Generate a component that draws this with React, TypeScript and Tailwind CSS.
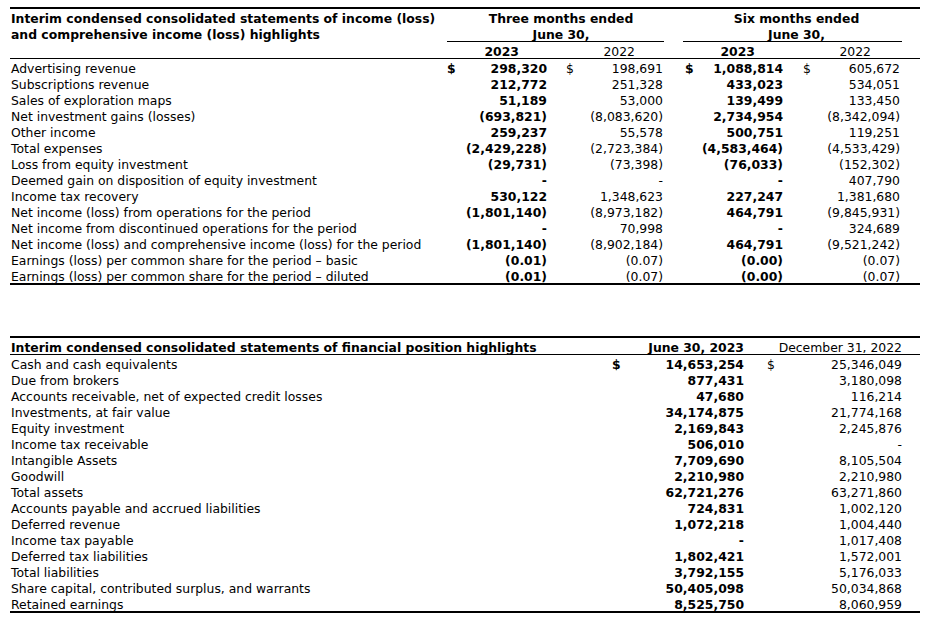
type IncomeRow = [string, string, string, string, string];
type PositionRow = [string, string, string];

const INCOME: IncomeRow[] = [
  ["Advertising revenue", "298,320", "198,691", "1,088,814", "605,672"],
  ["Subscriptions revenue", "212,772", "251,328", "433,023", "534,051"],
  ["Sales of exploration maps", "51,189", "53,000", "139,499", "133,450"],
  ["Net investment gains (losses)", "(693,821)", "(8,083,620)", "2,734,954", "(8,342,094)"],
  ["Other income", "259,237", "55,578", "500,751", "119,251"],
  ["Total expenses", "(2,429,228)", "(2,723,384)", "(4,583,464)", "(4,533,429)"],
  ["Loss from equity investment", "(29,731)", "(73,398)", "(76,033)", "(152,302)"],
  ["Deemed gain on disposition of equity investment", "-", "-", "-", "407,790"],
  ["Income tax recovery", "530,122", "1,348,623", "227,247", "1,381,680"],
  ["Net income (loss) from operations for the period", "(1,801,140)", "(8,973,182)", "464,791", "(9,845,931)"],
  ["Net income from discontinued operations for the period", "-", "70,998", "-", "324,689"],
  ["Net income (loss) and comprehensive income (loss) for the period", "(1,801,140)", "(8,902,184)", "464,791", "(9,521,242)"],
  ["Earnings (loss) per common share for the period \u2013 basic", "(0.01)", "(0.07)", "(0.00)", "(0.07)"],
  ["Earnings (loss) per common share for the period \u2013 diluted", "(0.01)", "(0.07)", "(0.00)", "(0.07)"],
];

const POSITION: PositionRow[] = [
  ["Cash and cash equivalents", "14,653,254", "25,346,049"],
  ["Due from brokers", "877,431", "3,180,098"],
  ["Accounts receivable, net of expected credit losses", "47,680", "116,214"],
  ["Investments, at fair value", "34,174,875", "21,774,168"],
  ["Equity investment", "2,169,843", "2,245,876"],
  ["Income tax receivable", "506,010", "-"],
  ["Intangible Assets", "7,709,690", "8,105,504"],
  ["Goodwill", "2,210,980", "2,210,980"],
  ["Total assets", "62,721,276", "63,271,860"],
  ["Accounts payable and accrued liabilities", "724,831", "1,002,120"],
  ["Deferred revenue", "1,072,218", "1,004,440"],
  ["Income tax payable", "-", "1,017,408"],
  ["Deferred tax liabilities", "1,802,421", "1,572,001"],
  ["Total liabilities", "3,792,155", "5,176,033"],
  ["Share capital, contributed surplus, and warrants", "50,405,098", "50,034,868"],
  ["Retained earnings", "8,525,750", "8,060,959"],
];

// amount cell: optional "$" on the left, figure flush right
function Amount({ value, dollar, bold, pad }: { value: string; dollar: boolean; bold?: boolean; pad: string }) {
  return (
    <div className={`flex justify-between ${pad} ${bold ? "font-bold" : ""}`}>
      <span>{dollar ? "$" : ""}</span>
      <span>{value}</span>
    </div>
  );
}

export default function App() {
  return (
    <div className="min-h-[631px] w-[944px] bg-white pt-[7px] pl-[10px] text-[12.4px] leading-5 text-black font-['DejaVu_Sans',Verdana,sans-serif]">
      {/* income statement */}
      <div className="w-[910px] border-t-2 border-b-2 border-black">
        <div className="flex">
          <div className="w-[437px] pl-px font-bold">
            <div className="h-4">Interim condensed consolidated statements of income (loss)</div>
            <div className="h-4">and comprehensive income (loss) highlights</div>
          </div>
          <div className="w-[217px] border-b border-black pl-[11px] text-center font-bold">
            <div className="h-4">Three months ended</div>
            <div className="h-4">June 30,</div>
          </div>
          <div className="w-[19px]" />
          <div className="w-[219px] border-b border-black pl-2 text-center font-bold">
            <div className="h-4">Six months ended</div>
            <div className="h-4">June 30,</div>
          </div>
        </div>
        <div className="grid h-[17px] grid-cols-[435px_102px_116px_120px_117px_20px] border-b border-black">
          <div />
          <div className="pr-[28px] text-right font-bold">2023</div>
          <div className="pr-[28px] text-right">2022</div>
          <div className="pr-[28px] text-right font-bold">2023</div>
          <div className="pr-[29px] text-right">2022</div>
          <div />
        </div>
        {INCOME.map(([label, a, b, c, d], i) => (
          <div key={label} className="grid h-4 grid-cols-[435px_102px_116px_120px_117px_20px] whitespace-nowrap">
            <div className="pl-px">{label}</div>
            <Amount value={a} dollar={i === 0} bold pad="pl-[2px]" />
            <Amount value={b} dollar={i === 0} pad="pl-[19px]" />
            <Amount value={c} dollar={i === 0} bold pad="pl-[22px]" />
            <Amount value={d} dollar={i === 0} pad="pl-[20px]" />
            <div />
          </div>
        ))}
      </div>

      {/* financial position */}
      <div className="mt-[51px] w-[910px] border-t-2 border-b-2 border-black">
        <div className="grid h-[17px] grid-cols-[600px_134px_158px_18px] border-b border-black whitespace-nowrap">
          <div className="pl-px font-bold">Interim condensed consolidated statements of financial position highlights</div>
          <div className="text-right font-bold">June 30, 2023</div>
          <div className="text-right">December 31, 2022</div>
          <div />
        </div>
        {POSITION.map(([label, a, b], i) => (
          <div key={label} className="grid h-4 grid-cols-[600px_134px_158px_18px] whitespace-nowrap">
            <div className="pl-px">{label}</div>
            <Amount value={a} dollar={i === 0} bold pad="pl-[2px]" />
            <Amount value={b} dollar={i === 0} pad="pl-[23px]" />
            <div />
          </div>
        ))}
      </div>
    </div>
  );
}
